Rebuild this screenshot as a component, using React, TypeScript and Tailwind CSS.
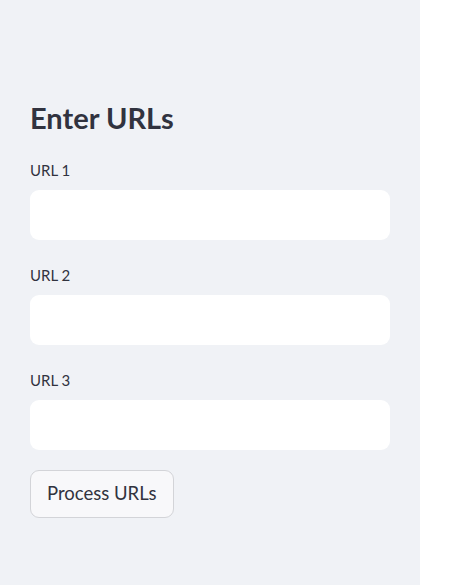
export default function App() {
  const fields = ['URL 1', 'URL 2', 'URL 3'];

  return (
    <div className="flex h-[585px] w-[473px] bg-white font-['Lato',sans-serif] text-[#31333f]">
      <div className="flex w-[420px] flex-col bg-[#f0f2f6] px-[30px] pt-[98px]">
        <h2 className="text-[29px] font-bold leading-[40px]">Enter URLs</h2>
        <div className="mt-[21px] flex flex-col gap-[24px]">
          {fields.map((f) => (
            <label key={f} className="flex flex-col">
              <span className="text-[15px] leading-[22px]">{f}</span>
              <input
                type="text"
                className="mt-[9px] h-[50px] w-full rounded-[9px] bg-white px-3 text-[18px] outline-none"
              />
            </label>
          ))}
        </div>
        <div className="mt-[20px]">
          <button className="h-[48px] rounded-[9px] border border-[#d3d4d8] bg-[#f8f8fa] px-[16px] text-[18.5px]">
            Process URLs
          </button>
        </div>
      </div>
    </div>
  );
}
